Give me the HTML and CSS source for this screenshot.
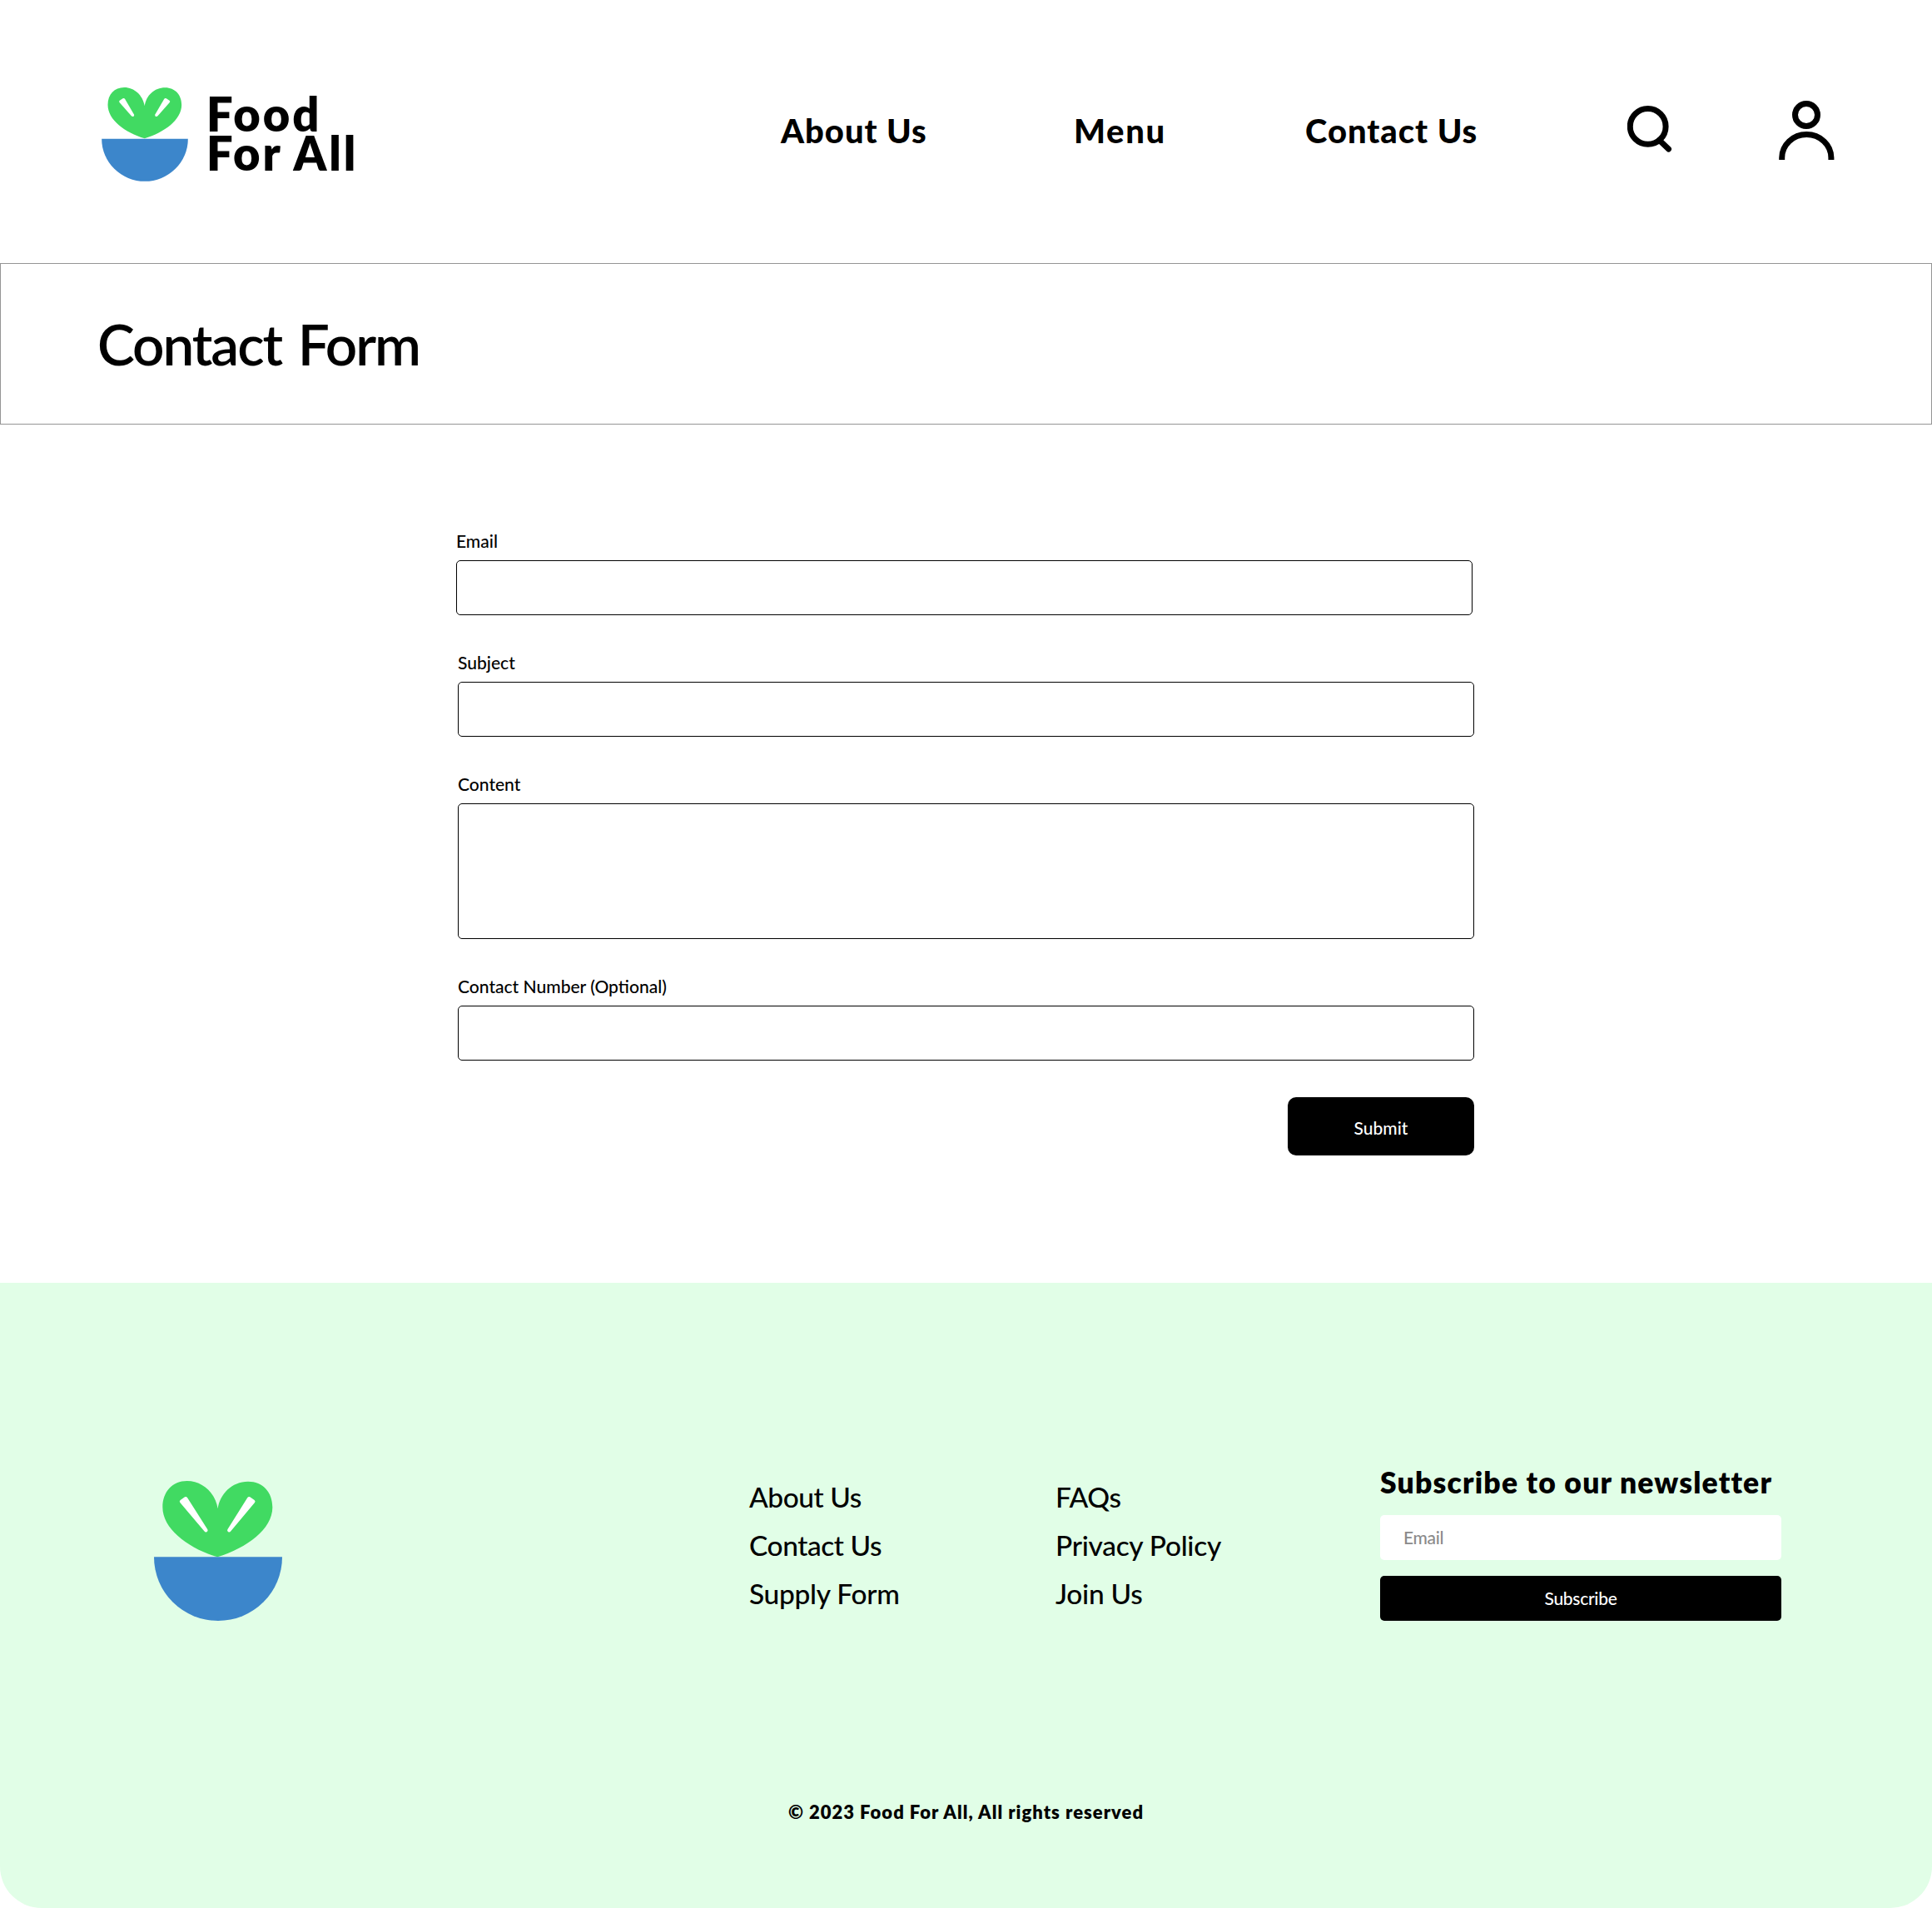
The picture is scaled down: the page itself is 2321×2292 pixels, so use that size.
FILE: index.html
```html
<!DOCTYPE html>
<html lang="en">
<head>
<meta charset="utf-8">
<title>Contact Form - Food For All</title>
<link rel="stylesheet" href="styles.css">
</head>
<body>
<header class="site-header">
  <a class="brand">
    <svg class="brand-mark" viewBox="66 45 311 339" aria-hidden="true">
      <path class="leaf" d="M221 229C150 208 88 162 88 108C88 70 112 45 147 45C184 45 214 73 221 112C226 75 255 46 295 46C330 46 354 72 354 108C354 162 292 207 221 229Z"/>
      <path class="vein" d="M130 99Q127 95 131 92L142 85Q147 83 150 87L182 142Q185 148 180 150Q176 151 173 148Z"/>
      <path class="vein" d="M311 99Q314 95 310 92L299 85Q294 83 291 87L259 142Q256 148 261 150Q265 151 268 148Z"/>
      <path class="bowl" d="M66 230H377A155.500 153.500 0 0 1 66 230Z"/>
    </svg>
    <span class="brand-name"><span class="word-food">Food</span><span class="word-all">For All</span></span>
  </a>
  <a class="nav-link">About Us</a>
  <a class="nav-link nav-menu">Menu</a>
  <a class="nav-link">Contact Us</a>
  <svg class="icon icon-search" viewBox="0 0 54 57" aria-hidden="true">
    <circle cx="24.700" cy="24.900" r="21.400"/>
    <path d="M38.500 41.500L49.500 52" stroke-linecap="round"/>
  </svg>
  <svg class="icon icon-user" viewBox="0 0 67 71" aria-hidden="true">
    <circle cx="33" cy="17" r="13.500"/>
    <path d="M3.700 71V68.500A29.600 28 0 0 1 62.900 68.500V71"/>
  </svg>
</header>

<section class="title-band">
  <h1>Contact Form</h1>
</section>

<main class="content">
  <form class="contact-form">
    <div class="field field-email"><label for="email">Email</label><input id="email" type="text"></div>
    <div class="field"><label for="subject">Subject</label><input id="subject" type="text"></div>
    <div class="field"><label for="message">Content</label><textarea id="message"></textarea></div>
    <div class="field"><label for="phone">Contact Number (Optional)</label><input id="phone" type="text"></div>
    <button class="submit" type="button">Submit</button>
  </form>
</main>

<footer class="site-footer">
  <div class="footer-grid">
    <svg class="footer-mark" viewBox="75 57 462 504" aria-hidden="true">
      <path class="leaf" d="M304 331C200 300 106 230 106 152C106 95 142 57 194 57C250 57 296 100 305 157C312 105 355 59 414 59C468 59 502 98 502 152C502 230 410 298 304 331Z"/>
      <path class="vein" d="M169 135Q165 131 170 126L186 115Q191 112 195 117L268 232Q271 238 265 241Q260 243 256 238Z"/>
      <path class="vein" d="M438 135Q442 131 437 126L421 115Q416 112 412 117L340 232Q337 238 343 241Q348 243 352 238Z"/>
      <path class="bowl" d="M75 331H537A231 230 0 0 1 75 331Z"/>
    </svg>
    <nav class="footer-links">
      <a>About Us</a>
      <a>Contact Us</a>
      <a class="loose">Supply Form</a>
    </nav>
    <nav class="footer-links">
      <a>FAQs</a>
      <a class="loose">Privacy Policy</a>
      <a class="loose">Join Us</a>
    </nav>
    <form class="newsletter">
      <h2>Subscribe to our newsletter</h2>
      <input type="text" placeholder="Email">
      <button type="button">Subscribe</button>
    </form>
  </div>
  <p class="copyright">© 2023 Food For All, All rights reserved</p>
</footer>
</body>
</html>
```

FILE: styles.css
```css
* { box-sizing: border-box; }

body {
  margin: 0;
  background: #fff;
  color: #000;
  font-family: Lato, "Liberation Sans", sans-serif;
}

h1, h2, p { margin: 0; }

.leaf { fill: #41da62; }
.vein { fill: #fff; }
.bowl { fill: #3c86cb; }

/* Header */
.site-header {
  display: grid;
  grid-template-columns: 816px 352px 278px 387px 182px 67px;
  align-items: start;
  height: 316px;
  padding: 105px 0 0 122px;
}

.brand {
  display: flex;
  align-items: flex-start;
  gap: 22px;
}

.brand-mark { width: 104px; height: 113px; }

.brand-name {
  display: flex;
  flex-direction: column;
  padding-top: 8px;
  font-size: 56px;
  font-weight: 800;
  line-height: 47px;
}

.word-food { letter-spacing: 3px; }
.word-all { letter-spacing: 2.9px; }

.nav-link {
  margin-top: 28px;
  font-size: 40px;
  font-weight: 900;
  line-height: 48px;
  letter-spacing: .96px;
}

.nav-menu { letter-spacing: 1.65px; }

.icon { fill: none; stroke: #000; stroke-width: 7; }
.icon-search { width: 54px; height: 57px; margin-top: 22px; }
.icon-user { width: 67px; height: 71px; margin-top: 16px; }

/* Page title */
.title-band {
  height: 194px;
  padding: 56px 116px 0;
  border: 1px solid #959595;
}

h1 {
  font-size: 67.4px;
  font-weight: 600;
  line-height: 80px;
  letter-spacing: -2.05px;
  word-spacing: 5px;
}

/* Contact form */
.content { padding: 127px 550px 153px; }

.contact-form {
  display: flex;
  flex-direction: column;
  gap: 44px;
  width: 1221px;
}

.field {
  display: flex;
  flex-direction: column;
  gap: 11px;
}

.field-email { margin: 0 2px 0 -2px; }

.field label {
  font-size: 21.06px;
  font-weight: 500;
  line-height: 25px;
}

.field input,
.field textarea {
  width: 100%;
  height: 66px;
  padding: 0 20px;
  border: 1px solid #000;
  border-radius: 5px;
  background: #fff;
  font: 500 21px/25px Lato, sans-serif;
  resize: none;
}

.field textarea { height: 163px; }

.submit {
  align-self: flex-end;
  width: 224px;
  height: 70px;
  padding: 3px 0 0;
  border: 0;
  border-radius: 10px;
  background: #000;
  color: #fff;
  font: 500 21px/25px Lato, sans-serif;
}

/* Footer */
.site-footer {
  height: 751px;
  padding-top: 218px;
  border-radius: 0 0 50px 50px;
  background: #e1fee7;
}

.footer-grid {
  display: grid;
  grid-template-columns: 715px 368px 390px 482px;
  align-items: start;
  padding-left: 185px;
}

.footer-mark { width: 154px; height: 168px; margin-top: 20px; }

.footer-links {
  display: flex;
  flex-direction: column;
  padding-top: 10px;
  font-size: 33.5px;
  font-weight: 500;
  line-height: 58px;
  letter-spacing: -.45px;
}

.footer-links .loose { letter-spacing: -.3px; }

.newsletter {
  display: flex;
  flex-direction: column;
  gap: 19px;
}

h2 {
  margin-bottom: -1px;
  font-size: 35.5px;
  font-weight: 800;
  line-height: 43px;
  letter-spacing: 1.17px;
  white-space: nowrap;
}

.newsletter input,
.newsletter button {
  height: 54px;
  border: 0;
  border-radius: 5px;
  font: 500 21px/25px Lato, sans-serif;
  letter-spacing: -.3px;
}

.newsletter input { padding: 0 28px 2px; background: #fff; }
.newsletter input::placeholder { color: #8a8a8a; opacity: 1; }
.newsletter button { padding: 0 0 2px; background: #000; color: #fff; }

.copyright {
  margin-top: 216px;
  font-size: 22px;
  font-weight: 800;
  line-height: 27px;
  letter-spacing: 1px;
  text-align: center;
}
```
